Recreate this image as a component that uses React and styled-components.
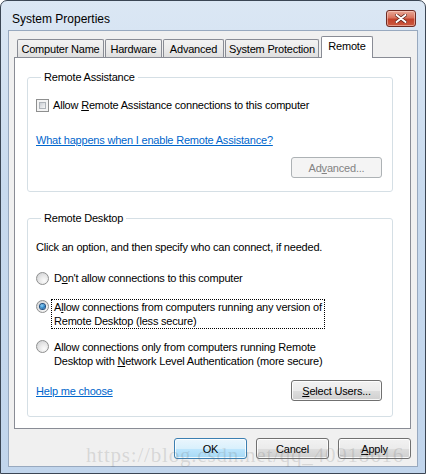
import styled, { createGlobalStyle } from "styled-components";

const GlobalStyle = createGlobalStyle`
  html, body {
    margin: 0;
    padding: 0;
    background: #ffffff;
  }
  body {
    font-family: "Liberation Sans", Arial, sans-serif;
    font-size: 11px;
    letter-spacing: -0.2px;
    color: #000;
  }
`;

const Frame = styled.div`
  position: relative;
  width: 426px;
  height: 474px;
  box-sizing: border-box;
  border: 1px solid #3b4654;
  border-radius: 7px 7px 0 0;
  background: linear-gradient(180deg, #dbe7f4 0%, #c8daee 40%, #c1d5ec 100%);
  display: flex;
  flex-direction: column;
  padding: 0 7px 6px 7px;
  overflow: hidden;
`;

const TitleBar = styled.div`
  height: 29px;
  box-sizing: border-box;
  padding: 6px 2px 0 4px;
  display: flex;
  align-items: center;
  justify-content: space-between;
`;

const Title = styled.div`
  font-size: 12px;
  letter-spacing: 0;
  color: #000;
`;

const CloseButton = styled.div`
  width: 30px;
  height: 17px;
  box-sizing: border-box;
  border: 1px solid #6e2b23;
  border-radius: 3px;
  background: linear-gradient(180deg, #e9a896 0%, #d9735d 45%, #c2412a 55%, #cc5a40 100%);
  box-shadow: inset 0 0 0 1px rgba(255, 220, 210, 0.5);
  display: flex;
  align-items: center;
  justify-content: center;
`;

const Client = styled.div`
  flex: 1;
  box-sizing: border-box;
  background: #f0f0f0;
  border: 1px solid #98a9bf;
  padding: 5px 6px 7px 5px;
  display: flex;
  flex-direction: column;
`;

const TabStrip = styled.div`
  height: 22px;
  display: flex;
  align-items: flex-end;
  padding-left: 3px;
  margin-bottom: -1px;
  position: relative;
  z-index: 1;
`;

const Tab = styled.div`
  box-sizing: border-box;
  width: ${(p) => p.$w}px;
  height: ${(p) => (p.$active ? 22 : 18)}px;
  margin-bottom: ${(p) => (p.$active ? 0 : 1)}px;
  margin-right: ${(p) => (p.$active ? 0 : 1)}px;
  margin-left: ${(p) => (p.$active ? 1 : 0)}px;
  border: 1px solid #898c95;
  border-bottom: none;
  border-radius: 2px 2px 0 0;
  background: ${(p) =>
    p.$active ? "#ffffff" : "linear-gradient(180deg, #f2f2f2 0%, #ebebeb 50%, #dfdfdf 100%)"};
  display: flex;
  align-items: ${(p) => (p.$active ? "flex-start" : "center")};
  justify-content: center;
  padding-top: ${(p) => (p.$active ? 3 : 0)}px;
  font-size: 11px;
  color: #000;
  white-space: nowrap;
`;

const Panel = styled.div`
  width: 397px;
  height: 372px;
  box-sizing: border-box;
  border: 1px solid #898c95;
  background: #ffffff;
  padding: 12px 0 0 12px;
`;

const Group = styled.fieldset`
  width: 366px;
  box-sizing: border-box;
  margin: 0 0 ${(p) => p.$gap || 0}px 0;
  padding: 0 10px ${(p) => p.$pb}px 8px;
  border: 1px solid #d5dfe5;
  border-radius: 3px;
  display: flex;
  flex-direction: column;
  min-width: 0;
`;

const Legend = styled.legend`
  padding: 0 3px;
  margin-left: 5px;
  line-height: 14px;
  font-size: 11px;
  color: #000;
`;

const Row = styled.div`
  display: flex;
  align-items: ${(p) => p.$align || "center"};
  gap: 4px;
  margin-top: ${(p) => p.$mt || 0}px;
  line-height: 14px;
`;

const Text = styled.div`
  line-height: 14px;
  margin-top: ${(p) => p.$mt || 0}px;
`;

const CheckBox = styled.div`
  width: 13px;
  height: 13px;
  box-sizing: border-box;
  border: 1px solid #8e8f8f;
  background: #f4f4f4;
  padding: 2px;
  flex-shrink: 0;
  &::after {
    content: "";
    display: block;
    width: 100%;
    height: 100%;
    box-sizing: border-box;
    border: 1px solid #aeb3b9;
    background: linear-gradient(135deg, #cbcfd5 0%, #f6f6f6 100%);
  }
`;

const Radio = styled.div`
  width: 13px;
  height: 13px;
  box-sizing: border-box;
  border-radius: 50%;
  border: 1px solid #8e8f8f;
  background: radial-gradient(circle at 65% 70%, #fbfbfb 0%, #e8e8e8 45%, #c9cbce 100%);
  display: flex;
  align-items: center;
  justify-content: center;
  flex-shrink: 0;
  margin-top: ${(p) => p.$mt || 0}px;
  &::after {
    content: "";
    display: ${(p) => (p.$checked ? "block" : "none")};
    width: 5px;
    height: 5px;
    border-radius: 50%;
    background: radial-gradient(circle at 40% 35%, #8fd4fa 0%, #2d83c5 55%, #17406d 100%);
    box-shadow: 0 0 0 1px #1e4e80;
  }
`;

const RadioLabel = styled.div`
  line-height: 14px;
  padding: 0 ${(p) => (p.$focus ? 2 : 0)}px;
  margin-left: ${(p) => (p.$focus ? -2 : 0)}px;
  border: ${(p) => (p.$focus ? "1px dotted #000" : "1px solid transparent")};
`;

const Link = styled.a`
  color: #0066cc;
  text-decoration: underline;
  line-height: 14px;
  cursor: pointer;
`;

const Button = styled.div`
  width: ${(p) => p.$w || 73}px;
  height: 21px;
  box-sizing: border-box;
  border-radius: 3px;
  border: 1px solid ${(p) => (p.$disabled ? "#adb2b5" : p.$default ? "#3c7fb1" : "#707070")};
  background: ${(p) =>
    p.$disabled
      ? "#f4f4f4"
      : p.$default
      ? "linear-gradient(180deg, #eaf6fd 0%, #d9f0fc 50%, #bee6fd 51%, #a7d9f5 100%)"
      : "linear-gradient(180deg, #f2f2f2 0%, #ebebeb 50%, #dddddd 51%, #cfcfcf 100%)"};
  box-shadow: ${(p) => (p.$disabled ? "none" : "inset 0 0 0 1px rgba(255,255,255,0.8)")};
  color: ${(p) => (p.$disabled ? "#838383" : "#000")};
  display: flex;
  align-items: center;
  justify-content: center;
  font-size: 11px;
  flex-shrink: 0;
`;

const ButtonRow = styled.div`
  display: flex;
  justify-content: flex-end;
  align-items: center;
  margin-top: ${(p) => p.$mt || 0}px;
  gap: 9px;
`;

const SpreadRow = styled.div`
  display: flex;
  justify-content: space-between;
  align-items: center;
  margin-top: ${(p) => p.$mt || 0}px;
`;

const Watermark = styled.div`
  position: absolute;
  left: 85px;
  top: 442px;
  font-family: "Liberation Serif", "Times New Roman", serif;
  font-size: 21px;
  letter-spacing: 0.8px;
  color: rgba(110, 110, 110, 0.2);
  pointer-events: none;
  white-space: nowrap;
`;

const tabs = [
  { label: "Computer Name", w: 87 },
  { label: "Hardware", w: 57 },
  { label: "Advanced", w: 61 },
  { label: "System Protection", w: 94 },
  { label: "Remote", w: 52, active: true },
];

export default function App() {
  return (
    <>
      <GlobalStyle />
      <Frame>
        <TitleBar>
          <Title>System Properties</Title>
          <CloseButton>
            <svg width="12" height="9" viewBox="0 0 12 9">
              <path
                d="M1.5 1 L10.5 8 M10.5 1 L1.5 8"
                stroke="#5a2018"
                strokeWidth="3.4"
                strokeLinecap="round"
              />
              <path
                d="M1.5 1 L10.5 8 M10.5 1 L1.5 8"
                stroke="#ffffff"
                strokeWidth="2"
                strokeLinecap="round"
              />
            </svg>
          </CloseButton>
        </TitleBar>
        <Client>
          <TabStrip>
            {tabs.map((t) => (
              <Tab key={t.label} $w={t.w} $active={t.active}>
                {t.label}
              </Tab>
            ))}
          </TabStrip>
          <Panel>
            <Group $pb={13} $gap={19}>
              <Legend>Remote Assistance</Legend>
              <Row $mt={14}>
                <CheckBox />
                <span>
                  Allow <u>R</u>emote Assistance connections to this computer
                </span>
              </Row>
              <Row $mt={21}>
                <Link>What happens when I enable Remote Assistance?</Link>
              </Row>
              <ButtonRow $mt={10}>
                <Button $w={91} $disabled>
                  <span>
                    Ad<u>v</u>anced...
                  </span>
                </Button>
              </ButtonRow>
            </Group>
            <Group $pb={15}>
              <Legend>Remote Desktop</Legend>
              <Text $mt={15}>Click an option, and then specify who can connect, if needed.</Text>
              <Row $mt={16}>
                <Radio />
                <RadioLabel>
                  D<u>o</u>n't allow connections to this computer
                </RadioLabel>
              </Row>
              <Row $mt={13} $align="flex-start">
                <Radio $checked $mt={1} />
                <RadioLabel $focus>
                  A<u>l</u>low connections from computers running any version of
                  <br />
                  Remote Desktop (less secure)
                </RadioLabel>
              </Row>
              <Row $mt={10} $align="flex-start">
                <Radio $mt={1} />
                <RadioLabel>
                  Allow connections only from computers running Remote
                  <br />
                  Desktop with <u>N</u>etwork Level Authentication (more secure)
                </RadioLabel>
              </Row>
              <SpreadRow $mt={11}>
                <Link>Help me choose</Link>
                <Button $w={91}>
                  <span>
                    <u>S</u>elect Users...
                  </span>
                </Button>
              </SpreadRow>
            </Group>
          </Panel>
          <ButtonRow $mt={9}>
            <Button $default>OK</Button>
            <Button>Cancel</Button>
            <Button>
              <span>
                <u>A</u>pply
              </span>
            </Button>
          </ButtonRow>
        </Client>
        <Watermark>https://blog.csdn.net/qq_40918616</Watermark>
      </Frame>
    </>
  );
}
